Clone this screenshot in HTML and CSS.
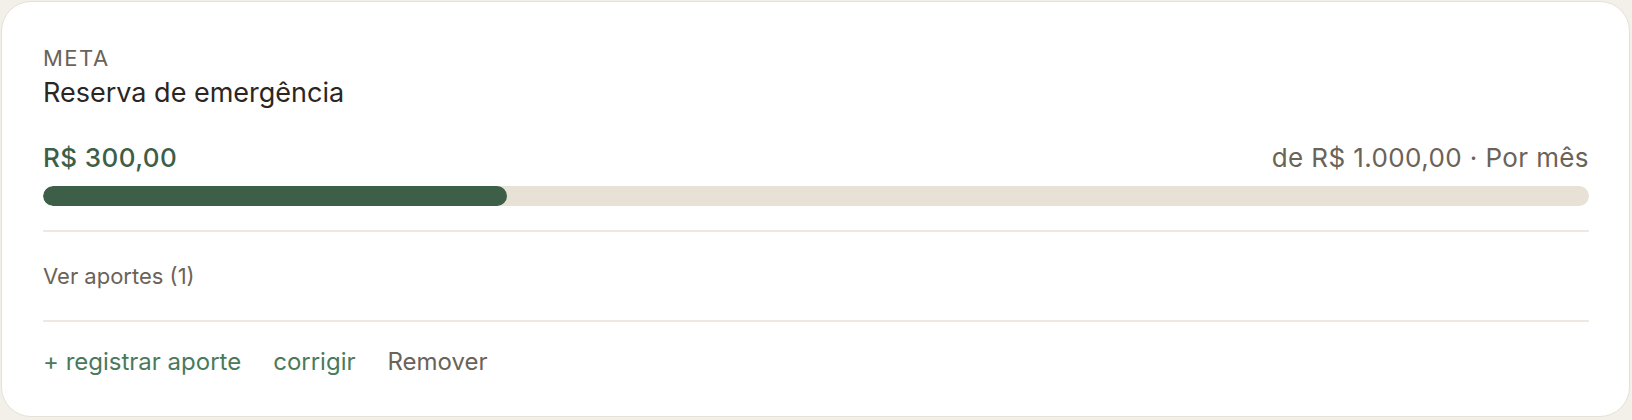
FILE: index.html
```html
<!DOCTYPE html>
<html lang="pt-BR">
<head>
    <meta charset="UTF-8">
    <meta name="viewport" content="width=device-width, initial-scale=1.0">
    <title>Meta</title>
    <link rel="stylesheet" href="styles.css">
</head>
<body>
    <div class="goal-card">
        <div class="goal-label">META</div>
        <div class="goal-title">Reserva de emergência</div>

        <div class="goal-values">
            <span class="goal-saved">R$ 300,00</span>
            <span class="goal-target">de R$ 1.000,00 · Por mês</span>
        </div>
        <div class="progress">
            <div class="progress-fill" style="width: 30%"></div>
        </div>

        <div class="goal-section">
            <a class="toggle-link" href="#">Ver aportes (1)</a>
        </div>

        <div class="goal-actions">
            <a class="action" href="#">+ registrar aporte</a>
            <a class="action" href="#">corrigir</a>
            <a class="action muted" href="#">Remover</a>
        </div>
    </div>
</body>
</html>
```

FILE: styles.css
```css
body { margin: 0; padding: 1px 2px 3px 1px; background: #f3f0ea; font-family: Inter, "Noto Sans", sans-serif; }
.goal-card { background: #fff; border: 1px solid #e6e0d6; border-radius: 30px; padding: 42px 40px 40px 41px; }
.goal-label { font-size: 22px; line-height: 28px; letter-spacing: 1.5px; color: #6b6258; }
.goal-title { font-size: 27px; line-height: 34px; margin-top: 4px; color: #2b2622; }
.goal-values { display: flex; justify-content: space-between; align-items: baseline; margin-top: 33px; line-height: 30px; }
.goal-saved { font-size: 26px; letter-spacing: 0.4px; color: #3d5e47; font-weight: 500; }
.goal-target { font-size: 26px; letter-spacing: 0.4px; color: #6b6258; }
.progress { height: 20px; background: #e8e1d6; border-radius: 10px; margin-top: 13px; overflow: hidden; }
.progress-fill { height: 100%; background: #3d5e47; border-radius: 10px; }
.goal-section { margin-top: 24px; border-top: 2px solid #ede8e0; border-bottom: 2px solid #ede8e0; padding: 30px 0; }
a { text-decoration: none; }
.toggle-link { display: block; font-size: 22px; line-height: 28px; color: #6b6258; }
.goal-actions { display: flex; gap: 32px; padding-top: 26px; }
.action { font-size: 24px; line-height: 28px; color: #4a7a5a; }
.action.muted { color: #6b6258; }
```
